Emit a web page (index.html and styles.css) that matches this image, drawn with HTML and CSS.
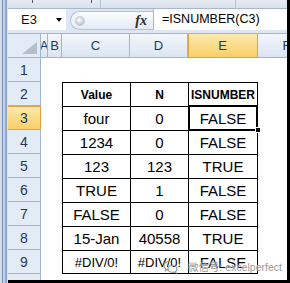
FILE: index.html
```html
<!DOCTYPE html>
<html lang="en">
<head>
    <meta charset="UTF-8">
    <title>ISNUMBER</title>
    <link rel="stylesheet" href="styles.css">
</head>
<body>

<div class="window">
    <div class="frame-left"></div>
    <div class="main">
        <div class="ribbon-edge">
            <span class="tick tick-a"></span>
            <span class="tick tick-b"></span>
            <span class="sep sep-a"></span>
            <span class="sep sep-b"></span>
        </div>

        <div class="formula-bar">
            <div class="name-box">
                <span>E3</span>
                <span class="drop"></span>
            </div>
            <div class="tools">
                <span class="knob"></span>
                <span class="fx">fx</span>
            </div>
            <div class="formula">=ISNUMBER(C3)</div>
        </div>

        <div class="sheet">
            <div class="corner"><span class="tri"></span></div>
            <div class="col-head">A</div>
            <div class="col-head">B</div>
            <div class="col-head">C</div>
            <div class="col-head">D</div>
            <div class="col-head active">E</div>
            <div class="col-head">F</div>

            <div class="row-head">1</div>
            <div class="cell"></div>
            <div class="cell"></div>
            <div class="cell"></div>
            <div class="cell"></div>
            <div class="cell"></div>
            <div class="cell"></div>

            <div class="row-head">2</div>
            <div class="cell"></div>
            <div class="cell"></div>
            <div class="cell t head">Value</div>
            <div class="cell t head">N</div>
            <div class="cell t t-end head">ISNUMBER</div>
            <div class="cell"></div>

            <div class="row-head active">3</div>
            <div class="cell"></div>
            <div class="cell"></div>
            <div class="cell t">four</div>
            <div class="cell t">0</div>
            <div class="cell t t-end sel">FALSE</div>
            <div class="cell"></div>

            <div class="row-head">4</div>
            <div class="cell"></div>
            <div class="cell"></div>
            <div class="cell t">1234</div>
            <div class="cell t">0</div>
            <div class="cell t t-end">FALSE</div>
            <div class="cell"></div>

            <div class="row-head">5</div>
            <div class="cell"></div>
            <div class="cell"></div>
            <div class="cell t">123</div>
            <div class="cell t">123</div>
            <div class="cell t t-end">TRUE</div>
            <div class="cell"></div>

            <div class="row-head">6</div>
            <div class="cell"></div>
            <div class="cell"></div>
            <div class="cell t">TRUE</div>
            <div class="cell t">1</div>
            <div class="cell t t-end">FALSE</div>
            <div class="cell"></div>

            <div class="row-head">7</div>
            <div class="cell"></div>
            <div class="cell"></div>
            <div class="cell t">FALSE</div>
            <div class="cell t">0</div>
            <div class="cell t t-end">FALSE</div>
            <div class="cell"></div>

            <div class="row-head">8</div>
            <div class="cell"></div>
            <div class="cell"></div>
            <div class="cell t">15-Jan</div>
            <div class="cell t">40558</div>
            <div class="cell t t-end">TRUE</div>
            <div class="cell"></div>

            <div class="row-head">9</div>
            <div class="cell"></div>
            <div class="cell"></div>
            <div class="cell t t-bottom err">#DIV/0!</div>
            <div class="cell t t-bottom err">#DIV/0!</div>
            <div class="cell t t-end t-bottom">FALSE</div>
            <div class="cell"></div>

            <div class="row-head"></div>
            <div class="cell"></div>
            <div class="cell"></div>
            <div class="cell"></div>
            <div class="cell"></div>
            <div class="cell"></div>
            <div class="cell"></div>
        </div>

        <div class="watermark">
            <svg width="15" height="14" viewBox="0 0 15 14">
                <g fill="none" stroke="#9b9b9b" stroke-width="1.2">
                    <path d="M6 1.5c-3 0-5 2-5 4.3 0 1.3.7 2.5 1.8 3.2l-.4 1.6 1.9-1c.5.2 1.1.2 1.7.2"/>
                    <path d="M9.5 5.5c2.5 0 4.5 1.6 4.5 3.5 0 1-.5 1.9-1.4 2.5l.3 1.3-1.5-.8c-.6.2-1.2.3-1.9.3-2.5 0-4.5-1.5-4.5-3.5S7 5.5 9.5 5.5z"/>
                </g>
            </svg>
            <span>微信号: excelperfect</span>
        </div>
    </div>
</div>

</body>
</html>
```

FILE: styles.css
```css
body {
    margin: 0;
    background: #ffffff;
    font-family: "Liberation Sans", Arial, sans-serif;
}

.window {
    display: flex;
    width: 290px;
    height: 283px;
    overflow: hidden;
}

.frame-left {
    flex: none;
    width: 8px;
    background: linear-gradient(to right, #d9dde3 0, #d9dde3 2px, #6d8cbf 2px, #6d8cbf 3px, #c6d4ea 3px, #c6d4ea 5px, #8ea8d2 5px, #8ea8d2 7px, #dbe4f1 7px);
}

.main {
    position: relative;
    flex: 1;
    min-width: 0;
    display: flex;
    flex-direction: column;
    border-right: 3px solid #000;
    border-bottom: 3px solid #000;
    overflow: hidden;
}

/* bottom edge of the ribbon */
.ribbon-edge {
    flex: none;
    display: flex;
    height: 8px;
    background: linear-gradient(#e6ebf2, #d9e1ec);
    border-bottom: 1px solid #a7b7cc;
}

.tick {
    width: 1px;
    height: 3px;
    background: #4a5565;
}

.tick-a { margin-left: 24px; }
.tick-b { margin-left: 58px; }

.sep {
    width: 1px;
    background: #b3c0d2;
}

.sep-a { margin-left: 8px; }
.sep-b { margin-left: 134px; }

/* formula bar */
.formula-bar {
    flex: none;
    display: flex;
    height: 24px;
    background: #dde6f2;
    border-bottom: 1px solid #a7b7cc;
}

.name-box {
    display: flex;
    align-items: center;
    width: 58px;
    height: 21px;
    padding-left: 13px;
    box-sizing: border-box;
    background: #ffffff;
    font-size: 13px;
    color: #111;
}

.drop {
    margin-left: auto;
    margin-right: 4px;
    border-left: 3.5px solid transparent;
    border-right: 3.5px solid transparent;
    border-top: 4px solid #000;
}

.tools {
    flex: 1;
    display: flex;
    align-items: center;
    margin: 2px 0 3px 4px;
    border: 1px solid #b4c2d6;
    border-right: none;
    border-radius: 10px 0 0 10px;
    background: linear-gradient(#fbfcfe, #e4ebf5);
}

.knob {
    width: 8px;
    height: 8px;
    margin-left: 4px;
    border-radius: 50%;
    border: 1px solid #c3ccd8;
    background: radial-gradient(circle at 40% 35%, #ffffff, #b9c3d0 75%);
}

.fx {
    margin-left: auto;
    margin-right: 6px;
    font-family: "Liberation Serif", serif;
    font-style: italic;
    font-weight: bold;
    font-size: 14px;
    color: #2b2b2b;
}

.formula {
    width: 134px;
    height: 21px;
    box-sizing: border-box;
    padding-left: 8px;
    border-left: 1px solid #a7b7cc;
    background: #ffffff;
    font-size: 12.5px;
    line-height: 21px;
    white-space: nowrap;
    overflow: hidden;
}

/* grid */
.sheet {
    display: grid;
    grid-template-columns: 33px 7px 14px 68px 58px 70px 58px;
    grid-auto-rows: 24px;
}

.corner,
.col-head,
.row-head {
    box-sizing: border-box;
    display: flex;
    align-items: center;
    justify-content: center;
    border-right: 1px solid #9eb6ce;
    border-bottom: 1px solid #9eb6ce;
    color: #1e3a5f;
    overflow: hidden;
}

.corner {
    justify-content: flex-end;
    align-items: flex-end;
    padding: 0 3px 3px 0;
    background: #e3ebf6;
}

.tri {
    width: 0;
    height: 0;
    border-left: 15px solid transparent;
    border-bottom: 12px solid #b4bfcd;
}

.col-head {
    background: linear-gradient(#f3f6fb, #dbe5f2);
    font-size: 13px;
}

.row-head {
    background: #e3ebf6;
    font-size: 14px;
}

.col-head.active {
    background: linear-gradient(#fde9ad, #f9cf6a);
    border-color: #e1a33f;
    box-shadow: inset 1px 0 #e1a33f;
}

.row-head.active {
    background: linear-gradient(#fde9ad, #f9cf6a);
    border-color: #e1a33f;
    box-shadow: inset 0 1px #e1a33f;
}

.cell {
    box-sizing: border-box;
    display: flex;
    align-items: center;
    justify-content: center;
    font-size: 15px;
    color: #000;
    white-space: nowrap;
}

.t {
    border-top: 1px solid #000;
    border-left: 1px solid #000;
}

.t-end { border-right: 1px solid #000; }
.t-bottom { border-bottom: 1px solid #000; }

.head {
    font-weight: bold;
    font-size: 12px;
}

.err { font-size: 13px; }

.sel { position: relative; }

.sel::before {
    content: "";
    position: absolute;
    top: -2px;
    bottom: -1px;
    left: -1px;
    right: -1px;
    border: 2px solid #000;
}

.sel::after {
    content: "";
    position: absolute;
    right: -4px;
    bottom: -3px;
    width: 4px;
    height: 4px;
    background: #000;
    border: 1px solid #fff;
}

.watermark {
    position: absolute;
    left: 155px;
    top: 259px;
    display: flex;
    align-items: center;
    gap: 10px;
    font-family: "Liberation Sans", "Noto Sans CJK SC", sans-serif;
    font-size: 10.5px;
    color: #9b9b9b;
    text-shadow: 0 0 2px #fff;
    white-space: nowrap;
}
```
